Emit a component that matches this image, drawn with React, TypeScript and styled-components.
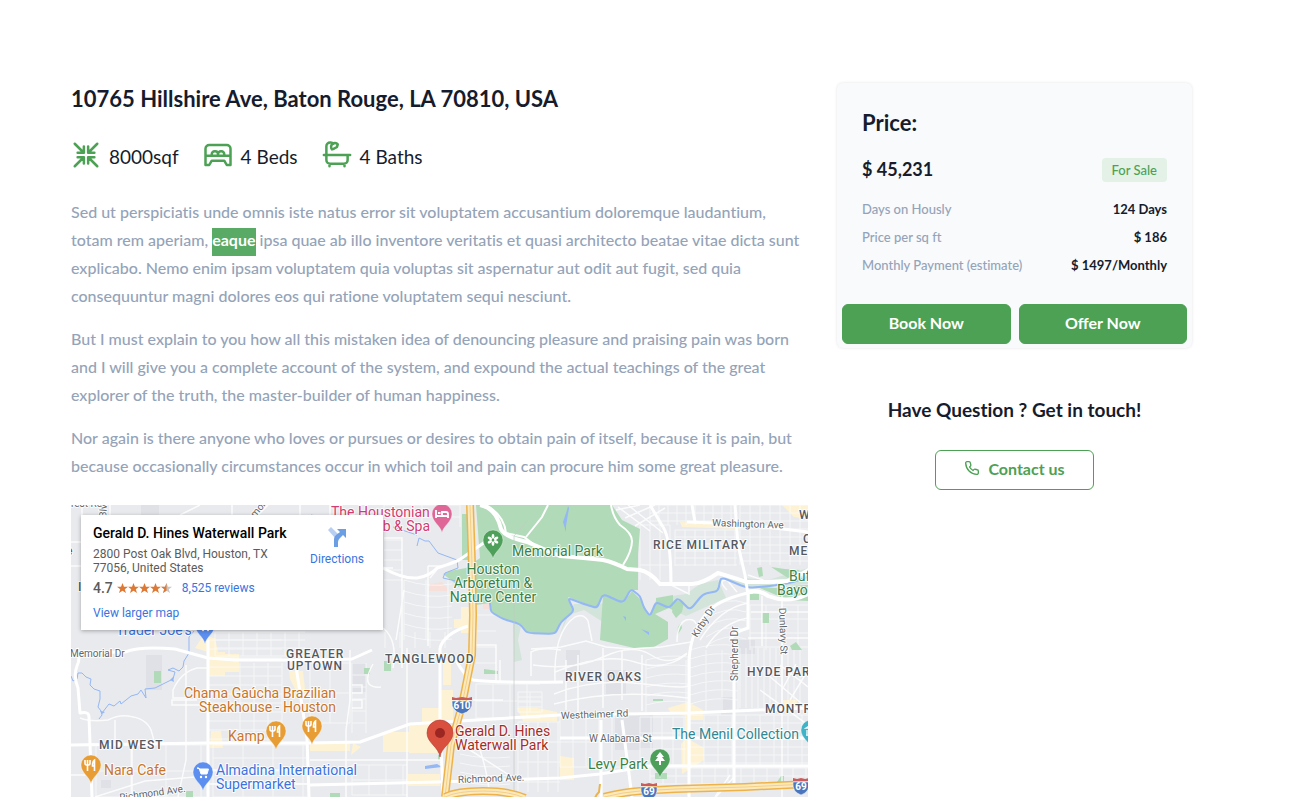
import React from "react";
import styled, { createGlobalStyle, css } from "styled-components";

const GlobalStyle = createGlobalStyle`
  * { box-sizing: border-box; }
  body {
    margin: 0;
    background: #ffffff;
    color: #161c2d;
    font-family: Lato, "Open Sans", sans-serif;
    font-variant-ligatures: none;
  }
  h1, h2, p, dl, dd, dt, ul { margin: 0; padding: 0; }
`;

const Page = styled.main`
  display: grid;
  grid-template-columns: minmax(0, 737fr) minmax(0, 355fr);
  gap: 29px;
  align-items: start;
  padding: 83px 121px 0 71px;
`;

const Details = styled.section`
  display: flex;
  flex-direction: column;
`;

const Address = styled.h1`
  font-size: 22px;
  line-height: 32px;
  font-weight: 700;
`;

const Facts = styled.ul`
  display: flex;
  gap: 24px;
  list-style: none;
  margin-top: 23px;
`;

const Fact = styled.li`
  display: flex;
  align-items: center;
  gap: 8px;
  height: 34px;
  font-size: 19px;
  line-height: 32px;
  svg { flex: none; }
  span { padding-top: 3px; }
`;

const Description = styled.div`
  display: flex;
  flex-direction: column;
  gap: 15px;
  margin-top: 26px;
  color: #94a3b8;
  font-size: 16px;
  line-height: 28px;
  font-weight: 500;
  white-space: nowrap;
`;

const Selected = styled.mark`
  padding: 2px 0 7px;
  background: #58aa65;
  color: #ffffff;
  font-weight: 700;
`;

const MapFrame = styled.div`
  position: relative;
  height: 292px;
  margin-top: 25px;
  overflow: hidden;
  background: #e8eaed;
  font-family: Roboto, sans-serif;
`;

const MapDrawing = styled.svg`
  display: block;
  width: 100%;
  height: 100%;
`;

const PlaceCard = styled.article`
  position: absolute;
  top: 10px;
  left: 10px;
  display: flex;
  justify-content: space-between;
  width: 302px;
  height: 115px;
  padding: 8px 19px 9px 12px;
  background: #ffffff;
  box-shadow: 0 1px 4px rgba(0, 0, 0, 0.3);
  color: #5b5b5b;
  font-size: 12px;
  line-height: 14px;
`;

const PlaceName = styled.h2`
  color: #000000;
  font-size: 14px;
  line-height: 20px;
  font-weight: 500;
`;

const PlaceAddress = styled.p`
  margin-top: 4px;
`;

const MapLink = styled.a`
  color: #3a74e0;
  text-decoration: none;
`;

const Rating = styled.div`
  display: flex;
  align-items: center;
  height: 16px;
  margin: 5px 0 10px;
  font-size: 14px;
  font-weight: 500;
  svg { margin: 0 10px 0 4px; }
  a { font-size: 12px; font-weight: 400; }
`;

const Directions = styled(MapLink)`
  display: flex;
  flex-direction: column;
  align-items: center;
  gap: 4px;
  height: 44px;
  margin-top: 3px;
`;

const Aside = styled.aside`
  display: flex;
  flex-direction: column;
`;

const PriceCard = styled.section`
  border-radius: 6px;
  background: #f8fafc;
  box-shadow: 0 0 3px rgba(60, 72, 88, 0.15);
`;

const PriceBody = styled.div`
  padding: 24px 25px 25px;
`;

const PriceTitle = styled.h2`
  font-size: 22px;
  line-height: 32px;
  font-weight: 700;
`;

const Row = styled.div`
  display: flex;
  justify-content: space-between;
  align-items: center;
`;

const PriceRow = styled(Row)`
  height: 28px;
  margin: 17px 0 11px;
`;

const Amount = styled.span`
  padding-bottom: 2px;
  font-size: 18px;
  font-weight: 700;
`;

const Badge = styled.span`
  padding: 0 10px;
  border-radius: 4px;
  background: #e3f1e7;
  color: #4ca154;
  font-size: 13px;
  line-height: 24px;
  font-weight: 500;
`;

const Stat = styled(Row)`
  height: 28px;
  font-size: 13px;
  dt { color: #94a3b8; font-weight: 500; }
  dd { font-weight: 700; }
`;

const Actions = styled.div`
  display: grid;
  grid-template-columns: 1fr 1fr;
  gap: 8px;
  padding: 0 5px 4px;
`;

const Button = styled.button<{ $outline?: boolean }>`
  display: flex;
  align-items: center;
  justify-content: center;
  gap: 8px;
  height: 40px;
  padding: 0 28px 4px;
  border: 1px solid #4ca154;
  border-radius: 6px;
  background: #4ca154;
  color: #ffffff;
  font-family: inherit;
  font-size: 16px;
  font-weight: 700;
  ${(p) =>
    p.$outline &&
    css`
      background: transparent;
      color: #4ca154;
    `}
`;

const Contact = styled.section`
  display: flex;
  flex-direction: column;
  align-items: center;
  gap: 26px;
  margin-top: 48px;
`;

const ContactTitle = styled.h2`
  font-size: 19px;
  line-height: 28px;
  font-weight: 700;
`;

const lineIcon = {
  width: 30,
  height: 30,
  viewBox: "0 0 24 24",
  fill: "none",
  stroke: "#4ca154",
  strokeWidth: 2,
  strokeLinecap: "round" as const,
  strokeLinejoin: "round" as const,
  "aria-hidden": true,
};

const CompressIcon = () => (
  <svg {...lineIcon}>
    <path d="M3 3l7 7M5.3 10.2h5v-5M21 3l-7 7M13.7 5.2v5h5M3 21l7-7M5.3 13.8h5v5M21 21l-7-7M18.7 13.8h-5v5" />
  </svg>
);

const BedIcon = () => (
  <svg {...lineIcon}>
    <path d="M2 20V7a3 3 0 0 1 3-3h14a3 3 0 0 1 3 3v13h-3l-2-3.5H7L5 20zM2 12.5h20M7 12v-.7A2.3 2.3 0 0 1 9.3 9h.5a2.2 2.2 0 0 1 2.2 2.2v.8M12 12v-.7A2.3 2.3 0 0 1 14.3 9h.4a2.3 2.3 0 0 1 2.3 2.3v.7" />
  </svg>
);

const BathIcon = () => (
  <svg {...lineIcon}>
    <path d="M1.500 12h21M3.500 12V5a3 3 0 0 1 3-3h.5a2.500 2.500 0 0 1 2 1M3.500 12v4a3 3 0 0 0 3 3h11a3 3 0 0 0 3-3v-4M6 19v2M18 19v2" />
    <path d="M8 7.500a3 3 0 1 1 4.600-4L12 5.500 9.500 7z" />
  </svg>
);

const PhoneIcon = () => (
  <svg {...lineIcon} width={16} height={16}>
    <path d="M21.500 16.500v3a2 2 0 0 1-2.200 2C10 21 3 14 2.500 4.700a2 2 0 0 1 2-2.200h3a2 2 0 0 1 2 1.700l.7 3a2 2 0 0 1-.6 2L8.300 10.500a14 14 0 0 0 5.200 5.200l1.300-1.300a2 2 0 0 1 2-.5l3 .7a2 2 0 0 1 1.700 1.900z" />
  </svg>
);

const DirectionsIcon = () => (
  <svg width="20" height="22" viewBox="0 0 20 22" aria-hidden="true">
    <path d="M1 4l3-3 7 7-3 4z" fill="#b8cff2" />
    <path d="M7 21v-8q0-2 2-4l4-3-3-3h9v9l-3-3-3 3q-2 2-2 4v5z" fill="#6c9ee3" />
  </svg>
);

const starPath = "M6 0l1.600 4H12L8.500 6.700 9.800 11 6 8.400 2.200 11l1.300-4.300L0 4h4.400z";

const Stars = () => (
  <svg width="55" height="11" viewBox="0 0 60 12" role="img" aria-label="4.7 out of 5">
    {[0, 12, 24, 36].map((x) => (
      <path key={x} d={starPath} fill="#dd7935" transform={`translate(${x} 0)`} />
    ))}
    <g transform="translate(48 0)">
      <path d={starPath} fill="#c8c8c8" />
      <path d="M6 0v8.400L2.200 11l1.300-4.300L0 4h4.400z" fill="#dd7935" />
    </g>
  </svg>
);

/* Street blocks: x, y, width, height, column step, row step (0 = none), skew */
const blocks: number[][] = [
  [208, 640, 74, 100, 0, 9, 0], [240, 663, 42, 78, 14, 0, 0],
  [384, 540, 18, 40, 0, 10, 0], [404, 580, 48, 60, 22, 11, 4],
  [385, 632, 62, 16, 15, 0, 0], [352, 663, 14, 70, 14, 12, 0],
  [310, 663, 40, 60, 20, 30, 0], [213, 745, 94, 52, 30, 13, 0],
  [96, 745, 110, 52, 35, 26, 0], [352, 765, 55, 30, 17, 15, 0],
  [476, 684, 64, 34, 17, 17, 0], [460, 745, 50, 42, 0, 9, 3], [518, 692, 24, 20, 12, 5, 0],
  [518, 722, 42, 70, 10, 20, 0], [476, 615, 20, 60, 0, 16, 0],
  [560, 717, 64, 50, 13, 25, 0], [640, 717, 46, 50, 11, 16, 0], [690, 715, 118, 50, 14, 8, 0],
  [650, 768, 158, 16, 13, 8, 0], [646, 660, 42, 52, 40, 9, -3],
  [690, 650, 48, 62, 16, 9, -4], [740, 648, 60, 60, 6, 0, 0],
  [640, 525, 30, 55, 10, 40, 0], [675, 530, 62, 36, 10, 7, 0],
  [650, 505, 88, 20, 9, 8, 0], [740, 505, 68, 60, 10, 8, 0],
  [750, 605, 58, 45, 16, 14, 0], [706, 610, 40, 38, 0, 9, -7],
  [384, 505, 76, 22, 38, 12, 0], [215, 632, 90, 24, 14, 8, 0],
];

const blockPath = ([x, y, w, h, dx, dy, skew]: number[]) => {
  let d = "";
  if (dx) for (let i = 0; i <= w; i += dx) d += `M${x + i} ${y}v${h}`;
  if (dy) for (let j = 0; j <= h; j += dy) d += `M${x} ${y + j}q${w / 2} ${skew * 2} ${w} ${skew}`;
  return d;
};

const minorRoads = [
  "M71 542h12M71 566h12M82 505v10M110 505v12M180 515l20-10M232 505v12M258 515l10-10M300 505v12M330 505v12",
  "M80 718q10 4 28 2 10-5 20-4 18 2 23 14 3 8 3 15M115 720v24M185 698h-12v-8q8-18 24-22h10M197 700h-25v5h34M186 665v95l-8 37",
  "M71 775h20M95 797l50-16 50-4 13-7M132 745v52M208 770h100M208 784h99",
  "M384 538h18v130M383 568h10M402 580v60M428 566v80M404 590l-8 50M383 628q15 12 10 40M428 566h12l-10 12",
  "M350 650v50l-4 30v67M310 760h130M407 648v149M373 664q-8 14-4 20 4 4 12 3M352 685h10v8h-10M352 700h10v8h-10",
  "M473 700h30M477 740q10 30 12 50M470 750l50 32M476 615v30h20v36M500 660v22",
  "M555 682q-2-50 20-65 9-4 13 4l4 20M531 649l30-2 25-6 20 6 25 2 30-2 30-5M531 676v-24q10-5 30-2M533 665q40 6 70-8t48-2 36-2M555 672q50-20 80-10t52-8M554 694q40-16 90-10t44 0M554 704q60-16 134-6M642 655v56M603 648v60M622 650v50M578 655v58M566 660v50",
  "M616 510l24-5M625 518l30-13M635 526l30-18M628 505l35 28M618 507l32 24M700 640q20-32 48-37M706 648q15-25 42-30M727 590q-10-10 0-10l10 12M671 585l18 9v-9M677 642q0-18 9-22 8-2 10 4",
  "M748 575l60 20M751 612h57M782 595v202M748 638h60M762 596v50",
  "M760 690l48 35M768 675l40 34M780 665l28 22M730 775l-15 22M716 797l18-20M790 700l18-30M782 690l14-26",
];

const majorRoads = [
  "M77 648q4 10 0 18-4 10 1 22l2 25q9-2 9 4l3 80",
  "M71 653l54-1q15-6 50-3l33 9 27 2h80l37-1 20-9M71 745l136-2h103l50-1 50-18 33-2 117-7 130-2 118-5",
  "M208 640v157M295 660l12 78 2 59M310 785l127-3 123-4 40-4 50-8h158M440 648v70l3 79",
  "M383 568q20 11 34 10 13-2 20-10 20-6 25-10l23-16",
  "M560 738h248M601 720v77M622 720l10 77M734 648v135",
  "M663 527q8 12 8 56M692 505l3 17",
  "M689 797V660q2-32 21-50 12-12 43-18M687 522l55 2 66 8",
  "M440 648q4-14 28-22M456 660q8 16 17 20 20 3 90 2",
];

const fills = {
  park: "#b1dab8",
  shop: "#fdf2d3",
  built: "#dfe1e6",
  health: "#f7dfda",
};

/* Rounds the corners of a run of points, keeping the middle of each side straight */
const soften = (pts: number[][]) => {
  let d = `M${pts[0]}`;
  for (let i = 1; i < pts.length - 1; i++) {
    const [x, y] = pts[i];
    const [px, py] = pts[i - 1];
    const [nx, ny] = pts[i + 1];
    d += `L${x + (px - x) * 0.25} ${y + (py - y) * 0.25}Q${x} ${y} ${x + (nx - x) * 0.25} ${y + (ny - y) * 0.25}`;
  }
  return `${d}L${pts[pts.length - 1]}`;
};

const bayou = [
  [490, 603], [491, 612], [503, 619], [520, 624], [527, 633], [555, 634], [561, 622], [574, 611],
  [568, 598], [584, 604], [597, 608], [603, 594], [623, 603], [631, 589], [640, 596], [644, 608], [650, 616],
  [656, 602], [669, 608], [678, 598], [690, 610], [703, 594], [718, 591], [721, 577], [747, 588],
  [770, 586], [790, 583], [808, 577],
];

type PinKind = "food" | "shop" | "hotel" | "park" | "tree" | "museum";
const pinColors: Record<PinKind, string> = {
  food: "#e89d34",
  shop: "#5d8ff0",
  hotel: "#df6797",
  park: "#4d9f5a",
  tree: "#4d9f5a",
  museum: "#3fb3c8",
};

const pinGlyphs: Record<PinKind, React.ReactNode> = {
  food: <path d="M-6-5v3q0 2 1.500 2h2Q-1 0-1-2v-3M-3.500-5V6M3.500 6V-5q-2 1-2 6h2" stroke="#fff" strokeWidth="1.600" fill="none" />,
  shop: <><path d="M-6-4h2l2 6h6l1.500-5h-9z" fill="#fff" stroke="#fff" strokeWidth="1" /><circle cx="-2" cy="5" r="1.200" fill="#fff" /><circle cx="3" cy="5" r="1.200" fill="#fff" /></>,
  hotel: <path d="M-6-4v8M-6 2H6M6 4V0q0-2-2-2h-4v3M-4-1h2.500" stroke="#fff" strokeWidth="1.800" fill="none" />,
  park: <g fill="#fff">{[0, 60, 120, 180, 240, 300].map((a) => <ellipse key={a} cx="0" cy="-3.600" rx="1.400" ry="2.400" transform={`rotate(${a})`} />)}</g>,
  tree: <path d="M0-7l4 5H2l3 4H1v4h-2V2h-4l3-4h-2z" fill="#fff" />,
  museum: <path d="M-5-2l5-3 5 3zM-4 0v4M0 0v4M4 0v4M-5 5H5" stroke="#fff" strokeWidth="1.300" fill="#fff" />,
};

const Pin = ({ x, y, kind }: { x: number; y: number; kind: PinKind }) => (
  <g transform={`translate(${x} ${y})`}>
    <path d="M0 19C-1 12-10 8-10 0a10 10 0 0 1 20 0C10 8 1 12 0 19z" fill={pinColors[kind]} stroke="#fff" strokeOpacity=".6" strokeWidth=".6" />
    {pinGlyphs[kind]}
  </g>
);

const Shield = ({ x, y, label }: { x: number; y: number; label: string }) => {
  const w = label.length > 2 ? 10 : 8;
  return (
    <g transform={`translate(${x} ${y})`}>
      <path d={`M${-w}-4Q${-w - 1} 6 0 9Q${w + 1} 6 ${w}-4z`} fill="#4b76bd" stroke="#fff" strokeWidth=".5" />
      <path d={`M${-w}-5v-3l4 1 ${w - 4}-1 ${w - 4} 1 4-1v3z`} fill="#c95c5c" />
      <text y="4" fontSize="10" fontWeight="700" textAnchor="middle" fill="#fff">{label}</text>
    </g>
  );
};

const Label = styled.text<{ $size?: number; $area?: boolean }>`
  font-size: ${(p) => p.$size ?? 14}px;
  font-weight: 400;
  paint-order: stroke;
  stroke: rgba(255, 255, 255, 0.85);
  stroke-width: 2px;
  stroke-linejoin: round;
  ${(p) =>
    p.$area &&
    css`
      font-size: 12px;
      font-weight: 500;
      letter-spacing: 1px;
      fill: #55595e;
    `}
`;

const orange = "#c8762b";
const green = "#3a8144";
const blue = "#3c73e0";
const grey = "#62666b";

const CityMap = () => (
  <MapDrawing viewBox="71 505 737 292" preserveAspectRatio="xMinYMin slice" role="img" aria-label="Map of Houston">
    <g fill={fills.built}>
      <path d="M146 655h16v35h-16zM141 505h18v10h-18zM615 715h38v35h-38zM566 650h14v25h-14zM735 640h20v14h-20zM352 662h14v30h-14zM101 780h10v8h-10zM721 697h14v18h-14zM606 670h20v25h-20z" />
    </g>
    <g fill={fills.shop}>
      <path d="M195 648l8-12 12 2 3 14-10 0zM209 652h16v24h-16zM225 654h14v18h-14zM211 731h10l2 17h-13zM289 671h14l2 18 4 10-10-2-9-18zM440 690h13v30h-13zM443 660h8v25h-8zM409 725h28v28h-28zM383 732h26v20h-26zM422 708h18v20h-18zM461 607h9v26h-9zM454 619h8v9h-8zM517 708h20l20 4v9h-34zM310 743h40v8h-40zM353 743l8 4-10 8zM408 774h32v12h-32z" />
      <path d="M668 708l20-6 15 8v10l-13 0v20l14 8v12l-22 14-1-30 4-4v-24l-15-4zM680 522l60 2v5l-58-2zM782 505h26v14l-14-2zM560 756l14 2v22h-14zM783 700h14v9h-14z" />
    </g>
    <path d="M430 584l12-2 5 6v3h-18zM483 603l6-2v8h-6z" fill={fills.health} />
    <g stroke="#ffffff" strokeWidth="1" fill="none" opacity=".6">
      {blocks.map((b, i) => <path key={i} d={blockPath(b)} />)}
    </g>
    <path d="M513 620l8 6-3 14 4 20-8 2zM574 604l26 0 30-8 10 4 4 24-38 0-22-14-18 6-6 18zM672 596l-4 12 18 8 22-10 18-8-8-18-18 4-14 10zM720 576l30 12 58-4v-16l-40 12z" fill="#d3e4da" />
    <g fill={fills.park}>
      <path d="M476 505h136l10 15 18 9-2 25v36l-7 0-8 13-20-8-6 13-29-11 6 14-13 11-6 12-28-1-7-9-17-5-12-7-1-9-14 2-6-30-11 12-8-7-8-6 7-3 16-3 14-10z" />
      <path d="M603 595l20 8 9-12 8 8 10 17 6-15 0-3 17-3v15l-4-2-14 6v0l13 8v17l-14 8-20 1-34-8z" />
      <path d="M674 600l10 2-2 10-6 6-4-6zM678 627l3-4 1 5-5 8zM757 568l5-1 1 9-4 1zM771 567l14 2 15 1-12 8zM762 613h7v10h-7zM750 594h9v6h-9zM755 586l20 2 15-2 18-1v16l-20-1zM154 671h7v12h-7zM364 668h6v6h-6zM384 661h7v10h-7zM484 669l14 2v3h-14zM653 699h10v2h-10zM655 773h12v6h-12zM777 782l4-6h3v9h-7zM186 791h7v6h-7zM330 793h10v4h-10zM462 514h6v46h-6zM438 755h4v5h-4zM790 646l6-4 6 8h-10z" />
    </g>
    <g stroke="#ffffff" strokeWidth="1.500" fill="none" opacity=".85">
      {minorRoads.map((d) => <path key={d} d={d} />)}
    </g>
    <g stroke="#94b7f5" strokeWidth="1" fill="none" strokeLinejoin="round">
      <path d="M71 676l2 5 4-2 1-6 4 0 4 4 5 2-1 6 4 4 6 2 0 8-2 8 3 4 1 4-3 4M102 713l7-9 5 2 6-5 1 3 10-8 7-2 3-4 5 8-1-9 10-1 10-5 8-4 2-7-7-2 5-2 6 3 4-4 1-6 5-8 0-16 5-6" />
      <path d="M417 546l2-8 6 3 4 0 9 12 19 7 1 8-13 5-2 5 13 3 3 6M311 515l9 2M393 527l24 8" />
      <path d={soften(bayou)} strokeWidth="2" />
    </g>
    <path d="M566 532l-3-10 4-12 1-4 1 2-3 18zM641 629l8 3v3zM623 616l3 1v4zM102 714l-2-3 5 1zM170 680l3-3 1 5zM425 766l12-2 5 3-17 2z" fill="#94b7f5" />
    <g stroke="#ffffff" strokeWidth="3" fill="none" strokeLinejoin="round">
      {majorRoads.map((d) => <path key={d} d={d} />)}
    </g>
    <path d="M650 505l13 22M735 505l3 40 7 30 3 20v33q-14 4-18 12" stroke="#ffffff" strokeWidth="3" fill="none" />
    <g fill="none" stroke="#ffffff">
      <path d="M480 505q16 3 21 24 4 8 26 13l33 14q25 2 43 4 10 2 24 9l13 1q10 2 20 14h32q10 0 26-11l29 9 20 0 20-1q10-4 23-12l8-8" strokeWidth="4" />
      <path d="M486 505q18 10 20 28l18 4 20 15M611 505q2 12 9 20 12 8 12 16 0 10-9 24M548 505l-6 12-16 20" strokeWidth="2" />
      <path d="M748 592q10-3 20 4 20 8 40-2" strokeWidth="4" />
    </g>
    <path d="M528 520l-14 16v261" stroke="#c2cac5" strokeOpacity=".7" fill="none" />
    <g fill="none">
      {["M470 505l2 60 1 50-1 40-10 50-11 40-6 52", "M604 797q20-5 36-6l35-2 70-2 63-3", "M445 797q12-6 38-6 26 0 42 7"].map((d) => (
        <g key={d}>
          <path d={d} stroke="#edb34a" strokeWidth="8" />
          <path d={d} stroke="#fce9bd" strokeWidth="5" />
          <path d={d} stroke="#f3cf87" strokeWidth="1" />
        </g>
      ))}
      <path d="M600 784l-1 8q-3 3-4 6" stroke="#edb34a" strokeWidth="2" />
    </g>
    <Shield x={462} y={705} label="610" />
    <Shield x={649} y={791} label="69" />
    <Shield x={801} y={786} label="69" />

    <Label $area x={653} y={549}>RICE MILITARY</Label>
    <Label $area x={286} y={658}>GREATER</Label>
    <Label $area x={287} y={670}>UPTOWN</Label>
    <Label $area x={385} y={663}>TANGLEWOOD</Label>
    <Label $area x={565} y={681}>RIVER OAKS</Label>
    <Label $area x={747} y={676}>HYDE PARK</Label>
    <Label $area x={765} y={713}>MONTROSE</Label>
    <Label $area x={99} y={749}>MID WEST</Label>
    <Label $area x={799} y={519}>WEST</Label>
    <Label $area x={803} y={543}>CENTER</Label>
    <Label $area x={789} y={555}>MEMORIAL</Label>
    <Label $area x={66} y={555}>e</Label>
    <Label $area x={78} y={591}>I</Label>
    <g fill={grey}>
      <Label $size={10} x={712} y={526} transform="rotate(2 712 526)">Washington Ave</Label>
      <Label $size={10} x={70} y={657}>Memorial Dr</Label>
      <Label $size={10} x={71} y={507}>rest Rd</Label>
      <Label $size={10} x={106} y={518} transform="rotate(-85 106 518)">Blvd</Label>
      <Label $size={10} x={255} y={518} transform="rotate(-50 255 518)">mor</Label>
      <Label $size={10} x={561} y={719} transform="rotate(-2 561 719)">Westheimer Rd</Label>
      <Label $size={10} x={589} y={742}>W Alabama St</Label>
      <Label $size={10} x={458} y={783} transform="rotate(-2 458 783)">Richmond Ave.</Label>
      <Label $size={10} x={120} y={801} transform="rotate(-8 120 801)">Richmond Ave.</Label>
      <Label $size={10} x={697} y={638} transform="rotate(-58 697 638)">Kirby Dr</Label>
      <Label $size={10} x={738} y={681} transform="rotate(-90 738 681)">Shepherd Dr</Label>
      <Label $size={10} x={779} y={608} transform="rotate(88 779 608)">Dunlavy St</Label>
    </g>
    <g fill="#d13d70">
      <Label x={331} y={517}>The Houstonian</Label>
      <Label x={430} y={531} textAnchor="end">Club &amp; Spa</Label>
    </g>
    <g fill={green}>
      <Label x={512} y={556}>Memorial Park</Label>
      <Label x={493} y={574} textAnchor="middle">Houston</Label>
      <Label x={493} y={588} textAnchor="middle">Arboretum &amp;</Label>
      <Label x={493} y={602} textAnchor="middle">Nature Center</Label>
      <Label x={789} y={581}>Buffalo</Label>
      <Label x={777} y={595}>Bayou Park</Label>
      <Label x={588} y={769}>Levy Park</Label>
    </g>
    <g fill={orange}>
      <Label x={336} y={698} textAnchor="end">Chama Gaúcha Brazilian</Label>
      <Label x={336} y={712} textAnchor="end">Steakhouse - Houston</Label>
      <Label x={228} y={741}>Kamp</Label>
      <Label x={104} y={775}>Nara Cafe</Label>
    </g>
    <g fill={blue}>
      <Label x={116} y={635}>Trader Joe's</Label>
      <Label x={216} y={775}>Almadina International</Label>
      <Label x={216} y={789}>Supermarket</Label>
    </g>
    <Label x={672} y={739} fill="#318894">The Menil Collection</Label>
    <g fill="#a52d28">
      <Label x={455} y={736}>Gerald D. Hines</Label>
      <Label x={455} y={750}>Waterwall Park</Label>
    </g>

    <Pin x={442} y={514} kind="hotel" />
    <Pin x={493} y={540} kind="park" />
    <Pin x={660} y={759} kind="tree" />
    <Pin x={205} y={625} kind="shop" />
    <Pin x={276} y={731} kind="food" />
    <Pin x={312} y={726} kind="food" />
    <Pin x={91} y={765} kind="food" />
    <Pin x={203} y={772} kind="shop" />
    <Pin x={811} y={730} kind="museum" />
    <path d="M440 757c-1-10-13-14-13-24a13 13 0 0 1 26 0c0 10-12 14-13 24z" fill="#d9503f" stroke="#b03a31" strokeWidth=".6" />
    <circle cx="440" cy="733" r="5" fill="#9c2722" />
  </MapDrawing>
);

const facts = [
  { icon: <CompressIcon />, text: "8000sqf" },
  { icon: <BedIcon />, text: "4 Beds" },
  { icon: <BathIcon />, text: "4 Baths" },
];

const stats = [
  ["Days on Hously", "124 Days"],
  ["Price per sq ft", "$ 186"],
  ["Monthly Payment (estimate)", "$ 1497/Monthly"],
];

export default function App() {
  return (
    <>
      <GlobalStyle />
      <Page>
        <Details>
          <Address>10765 Hillshire Ave, Baton Rouge, LA 70810, USA</Address>
          <Facts>
            {facts.map((f) => (
              <Fact key={f.text}>
                {f.icon}
                <span>{f.text}</span>
              </Fact>
            ))}
          </Facts>
          <Description>
            <p>
              Sed ut perspiciatis unde omnis iste natus error sit voluptatem accusantium doloremque laudantium,<br />
              totam rem aperiam, <Selected>eaque</Selected> ipsa quae ab illo inventore veritatis et quasi architecto beatae vitae dicta sunt<br />
              explicabo. Nemo enim ipsam voluptatem quia voluptas sit aspernatur aut odit aut fugit, sed quia<br />
              consequuntur magni dolores eos qui ratione voluptatem sequi nesciunt.
            </p>
            <p>
              But I must explain to you how all this mistaken idea of denouncing pleasure and praising pain was born<br />
              and I will give you a complete account of the system, and expound the actual teachings of the great<br />
              explorer of the truth, the master-builder of human happiness.
            </p>
            <p>
              Nor again is there anyone who loves or pursues or desires to obtain pain of itself, because it is pain, but<br />
              because occasionally circumstances occur in which toil and pain can procure him some great pleasure.
            </p>
          </Description>
          <MapFrame>
            <CityMap />
            <PlaceCard>
              <div>
                <PlaceName>Gerald D. Hines Waterwall Park</PlaceName>
                <PlaceAddress>
                  2800 Post Oak Blvd, Houston, TX<br />
                  77056, United States
                </PlaceAddress>
                <Rating>
                  4.7 <Stars />
                  <MapLink href="#reviews">8,525 reviews</MapLink>
                </Rating>
                <MapLink href="#map">View larger map</MapLink>
              </div>
              <Directions href="#directions">
                <DirectionsIcon />
                Directions
              </Directions>
            </PlaceCard>
          </MapFrame>
        </Details>
        <Aside>
          <PriceCard>
            <PriceBody>
              <PriceTitle>Price:</PriceTitle>
              <PriceRow>
                <Amount>$ 45,231</Amount>
                <Badge>For Sale</Badge>
              </PriceRow>
              <dl>
                {stats.map(([term, value]) => (
                  <Stat key={term}>
                    <dt>{term}</dt>
                    <dd>{value}</dd>
                  </Stat>
                ))}
              </dl>
            </PriceBody>
            <Actions>
              <Button type="button">Book Now</Button>
              <Button type="button">Offer Now</Button>
            </Actions>
          </PriceCard>
          <Contact>
            <ContactTitle>Have Question ? Get in touch!</ContactTitle>
            <Button type="button" $outline>
              <PhoneIcon />
              Contact us
            </Button>
          </Contact>
        </Aside>
      </Page>
    </>
  );
}
